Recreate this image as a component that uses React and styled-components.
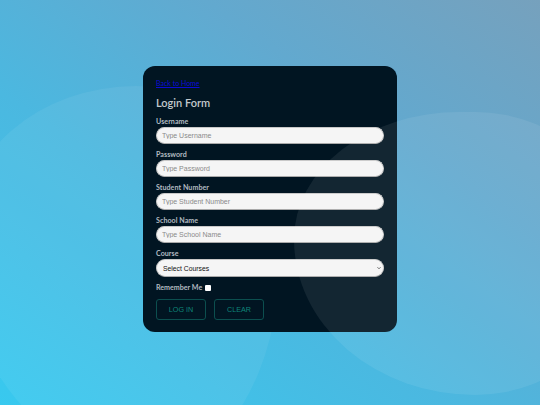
import React from 'react';
import styled, { createGlobalStyle } from 'styled-components';

const GlobalStyle = createGlobalStyle`
  html, body {
    margin: 0;
    padding: 0;
  }
  body {
    font-family: 'Lato', 'Noto Sans', sans-serif;
  }
`;

const Page = styled.div`
  position: relative;
  width: 540px;
  height: 405px;
  overflow: hidden;
  background: linear-gradient(35deg, #38c9ef 0%, #4bb8e0 40%, #62a9cf 70%, #76a1bd 100%);
  display: flex;
  justify-content: center;
  padding-top: 66px;
  box-sizing: border-box;
`;

const Blob = styled.div`
  position: absolute;
  pointer-events: none;
  background: rgba(255, 255, 255, ${(p) => p.$alpha});
  z-index: ${(p) => p.$z};
`;

const LeftBlob = styled(Blob)`
  left: -40px;
  top: 86px;
  width: 320px;
  height: 380px;
  border-radius: 55% 45% 40% 60% / 40% 45% 55% 60%;
`;

const RightBlob = styled(Blob)`
  left: 294px;
  top: 112px;
  width: 330px;
  height: 283px;
  border-radius: 50% 45% 45% 55% / 45% 50% 50% 55%;
`;

const Card = styled.form`
  position: relative;
  z-index: 1;
  width: 254px;
  height: 266px;
  box-sizing: border-box;
  padding: 12px 13px 12px;
  background: #011522;
  border-radius: 12px;
  display: flex;
  flex-direction: column;
`;

const BackLink = styled.a`
  font-family: 'Lato', sans-serif;
  font-size: 7px;
  line-height: 10px;
  color: #0b0bd8;
  text-decoration: underline;
  align-self: flex-start;
`;

const Title = styled.h2`
  margin: 8px 0 0;
  font-size: 11px;
  line-height: 14px;
  font-weight: 600;
  color: #c2c8cc;
`;

const Fields = styled.div`
  display: flex;
  flex-direction: column;
  gap: 6px;
  margin-top: 7px;
`;

const Field = styled.label`
  display: flex;
  flex-direction: column;
`;

const Label = styled.span`
  font-size: 7.1px;
  line-height: 10px;
  font-weight: 700;
  color: #b3bbc1;
  letter-spacing: 0.05px;
`;

const Input = styled.input`
  height: 17px;
  box-sizing: border-box;
  border: 1px solid #c8c8c8;
  border-bottom-color: #a9a9a9;
  border-radius: 9px;
  background: #f5f5f5;
  padding: 0 5px;
  font-family: 'Liberation Sans', Arial, sans-serif;
  font-size: 7px;
  color: #222;
  outline: none;
  &::placeholder {
    color: #8a8a8a;
  }
`;

const SelectWrap = styled.div`
  position: relative;
  display: flex;
`;

const Select = styled.select`
  flex: 1;
  height: 18px;
  box-sizing: border-box;
  appearance: none;
  border: 1px solid #c8c8c8;
  border-bottom-color: #a9a9a9;
  border-radius: 9px;
  background: #f5f5f5;
  padding: 0 6px;
  font-family: 'Liberation Sans', Arial, sans-serif;
  font-size: 6.8px;
  color: #111;
  outline: none;
`;

const Chevron = styled.svg`
  position: absolute;
  right: 3px;
  top: 7px;
  width: 4px;
  height: 4px;
  pointer-events: none;
`;

const Remember = styled.label`
  display: flex;
  align-items: center;
  gap: 3px;
  margin-top: 6px;
  font-size: 7.1px;
  line-height: 10px;
  font-weight: 700;
  color: #b3bbc1;
`;

const Check = styled.span`
  width: 5.5px;
  height: 5.5px;
  background: #fff;
  border-radius: 1px;
`;

const Buttons = styled.div`
  display: flex;
  gap: 8px;
  margin-top: 6px;
`;

const Button = styled.button`
  width: 50px;
  height: 21px;
  box-sizing: border-box;
  background: transparent;
  border: 1px solid #0c4f4f;
  border-radius: 3px;
  color: #0f8579;
  font-family: 'Liberation Sans', Arial, sans-serif;
  font-size: 7.2px;
  padding: 0;
  cursor: pointer;
`;

const fields = [
  { label: 'Username', placeholder: 'Type Username' },
  { label: 'Password', placeholder: 'Type Password', type: 'password' },
  { label: 'Student Number', placeholder: 'Type Student Number' },
  { label: 'School Name', placeholder: 'Type School Name' },
];

const App = () => {
  return (
    <>
      <GlobalStyle />
      <Page>
        <LeftBlob $alpha={0.06} $z={0} />
        <Card onSubmit={(e) => e.preventDefault()}>
          <BackLink href="#">Back to Home</BackLink>
          <Title>Login Form</Title>
          <Fields>
            {fields.map((f, i) => (
              <Field key={`field_${i}`}>
                <Label>{f.label}</Label>
                <Input type={f.type || 'text'} placeholder={f.placeholder} />
              </Field>
            ))}
            <Field>
              <Label>Course</Label>
              <SelectWrap>
                <Select defaultValue="">
                  <option value="">Select Courses</option>
                  <option value="bsit">BSIT</option>
                  <option value="bscs">BSCS</option>
                </Select>
                <Chevron viewBox="0 0 8 8">
                  <path d="M1 2.5 L4 5.5 L7 2.5" fill="none" stroke="#333" strokeWidth="1.6" />
                </Chevron>
              </SelectWrap>
            </Field>
          </Fields>
          <Remember>
            Remember Me <Check />
          </Remember>
          <Buttons>
            <Button type="submit">LOG IN</Button>
            <Button type="reset">CLEAR</Button>
          </Buttons>
        </Card>
        <RightBlob $alpha={0.075} $z={2} />
      </Page>
    </>
  );
};

export default App;
